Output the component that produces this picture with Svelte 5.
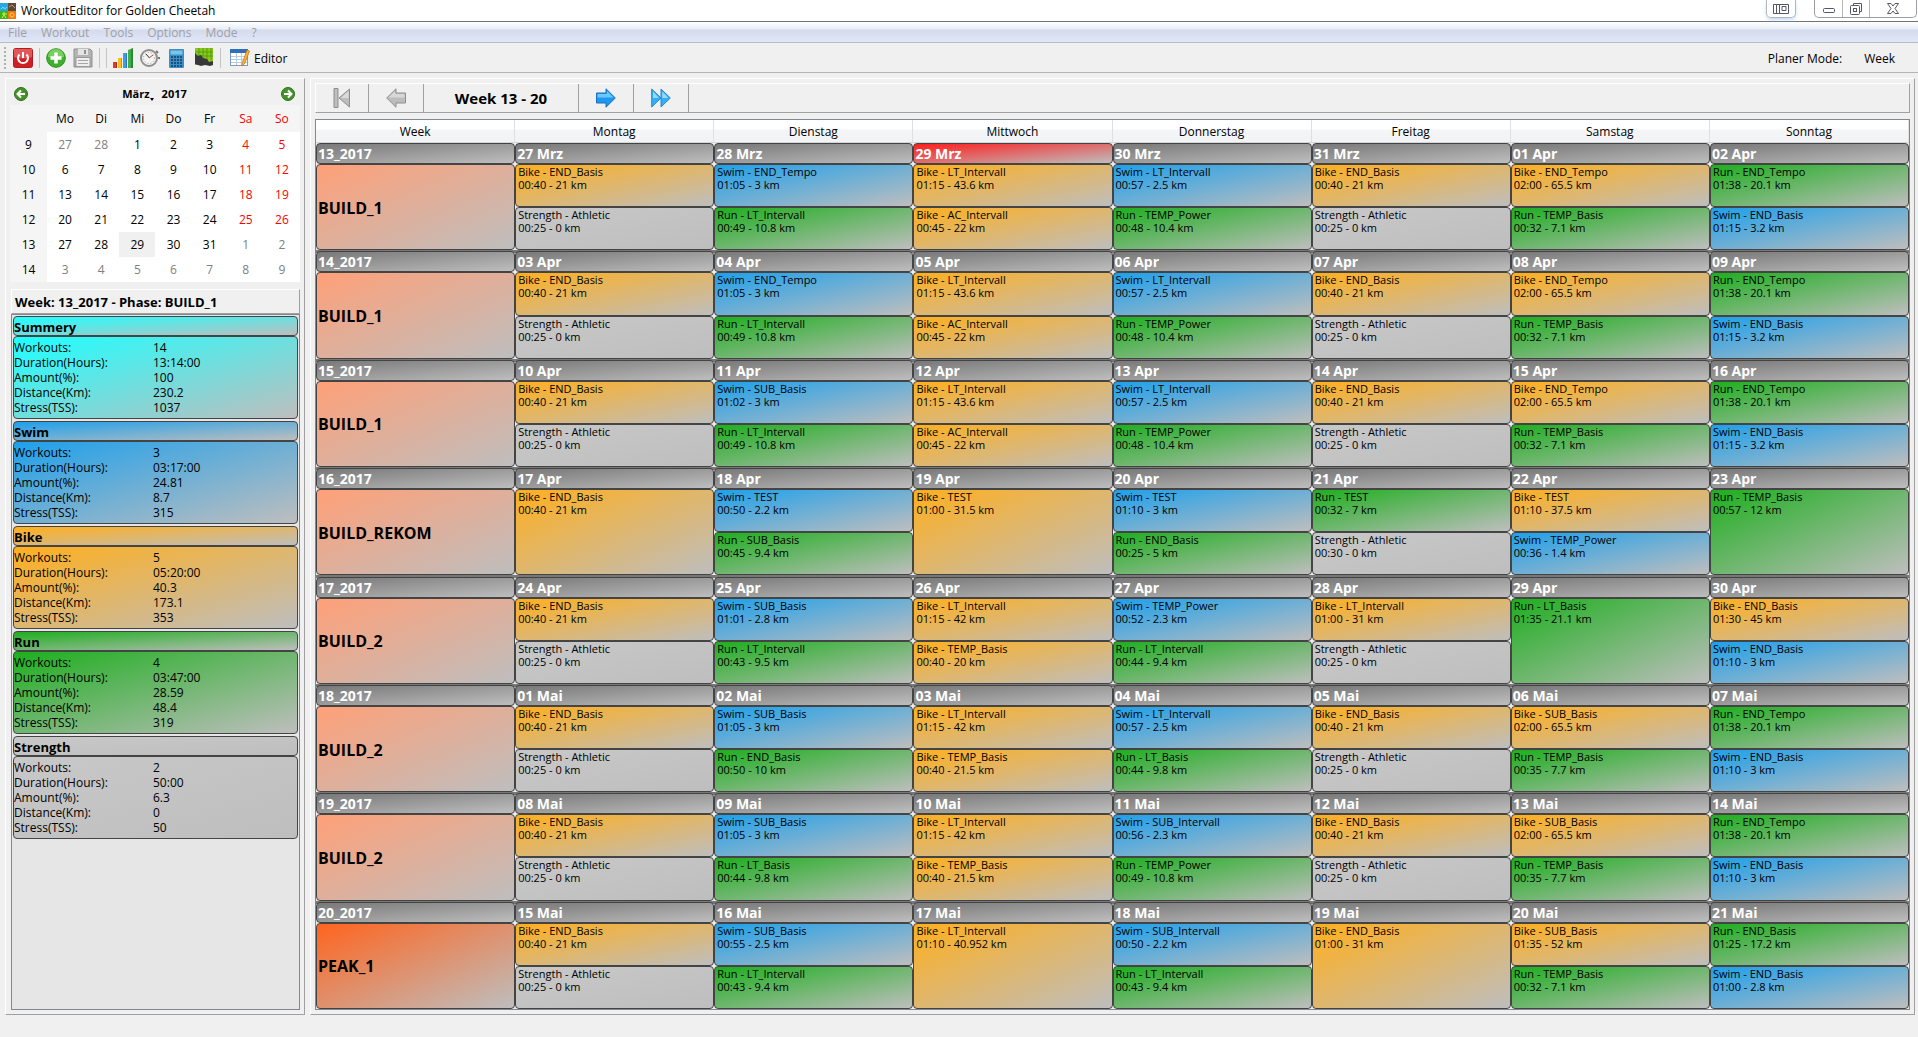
<script lang="ts">
  const menus = ['File', 'Workout', 'Tools', 'Options', 'Mode', '?'];
  const dayNames = ['Mo', 'Di', 'Mi', 'Do', 'Fr', 'Sa', 'So'];
  const columns = ['Week', 'Montag', 'Dienstag', 'Mittwoch', 'Donnerstag', 'Freitag', 'Samstag', 'Sonntag'];

  const calendar = [
    { week: 9, days: [27, 28, 1, 2, 3, 4, 5] },
    { week: 10, days: [6, 7, 8, 9, 10, 11, 12] },
    { week: 11, days: [13, 14, 15, 16, 17, 18, 19] },
    { week: 12, days: [20, 21, 22, 23, 24, 25, 26] },
    { week: 13, days: [27, 28, 29, 30, 31, 1, 2] },
    { week: 14, days: [3, 4, 5, 6, 7, 8, 9] },
  ];
  const outside = (row: number, day: number) => (row === 0 && day > 20) || (row > 3 && day < 10);

  const labels = ['Workouts:', 'Duration(Hours):', 'Amount(%):', 'Distance(Km):', 'Stress(TSS):'];
  const totals = [
    { name: 'Summery', kind: 'summary', values: ['14', '13:14:00', '100', '230.2', '1037'] },
    { name: 'Swim', kind: 'swim', values: ['3', '03:17:00', '24.81', '8.7', '315'] },
    { name: 'Bike', kind: 'bike', values: ['5', '05:20:00', '40.3', '173.1', '353'] },
    { name: 'Run', kind: 'run', values: ['4', '03:47:00', '28.59', '48.4', '319'] },
    { name: 'Strength', kind: 'strength', values: ['2', '50:00', '6.3', '0', '50'] },
  ];

  // One string per day; workouts of a day are separated by "/".
  const plan = [
    { week: '13_2017', phase: 'BUILD_1', dates: ['27 Mrz', '28 Mrz', '29 Mrz', '30 Mrz', '31 Mrz', '01 Apr', '02 Apr'], days: [
      'Bike END_Basis 00:40 21/Strength Athletic 00:25 0', 'Swim END_Tempo 01:05 3/Run LT_Intervall 00:49 10.8',
      'Bike LT_Intervall 01:15 43.6/Bike AC_Intervall 00:45 22', 'Swim LT_Intervall 00:57 2.5/Run TEMP_Power 00:48 10.4',
      'Bike END_Basis 00:40 21/Strength Athletic 00:25 0', 'Bike END_Tempo 02:00 65.5/Run TEMP_Basis 00:32 7.1',
      'Run END_Tempo 01:38 20.1/Swim END_Basis 01:15 3.2'] },
    { week: '14_2017', phase: 'BUILD_1', dates: ['03 Apr', '04 Apr', '05 Apr', '06 Apr', '07 Apr', '08 Apr', '09 Apr'], days: [
      'Bike END_Basis 00:40 21/Strength Athletic 00:25 0', 'Swim END_Tempo 01:05 3/Run LT_Intervall 00:49 10.8',
      'Bike LT_Intervall 01:15 43.6/Bike AC_Intervall 00:45 22', 'Swim LT_Intervall 00:57 2.5/Run TEMP_Power 00:48 10.4',
      'Bike END_Basis 00:40 21/Strength Athletic 00:25 0', 'Bike END_Tempo 02:00 65.5/Run TEMP_Basis 00:32 7.1',
      'Run END_Tempo 01:38 20.1/Swim END_Basis 01:15 3.2'] },
    { week: '15_2017', phase: 'BUILD_1', dates: ['10 Apr', '11 Apr', '12 Apr', '13 Apr', '14 Apr', '15 Apr', '16 Apr'], days: [
      'Bike END_Basis 00:40 21/Strength Athletic 00:25 0', 'Swim SUB_Basis 01:02 3/Run LT_Intervall 00:49 10.8',
      'Bike LT_Intervall 01:15 43.6/Bike AC_Intervall 00:45 22', 'Swim LT_Intervall 00:57 2.5/Run TEMP_Power 00:48 10.4',
      'Bike END_Basis 00:40 21/Strength Athletic 00:25 0', 'Bike END_Tempo 02:00 65.5/Run TEMP_Basis 00:32 7.1',
      'Run END_Tempo 01:38 20.1/Swim END_Basis 01:15 3.2'] },
    { week: '16_2017', phase: 'BUILD_REKOM', dates: ['17 Apr', '18 Apr', '19 Apr', '20 Apr', '21 Apr', '22 Apr', '23 Apr'], days: [
      'Bike END_Basis 00:40 21', 'Swim TEST 00:50 2.2/Run SUB_Basis 00:45 9.4', 'Bike TEST 01:00 31.5',
      'Swim TEST 01:10 3/Run END_Basis 00:25 5', 'Run TEST 00:32 7/Strength Athletic 00:30 0',
      'Bike TEST 01:10 37.5/Swim TEMP_Power 00:36 1.4', 'Run TEMP_Basis 00:57 12'] },
    { week: '17_2017', phase: 'BUILD_2', dates: ['24 Apr', '25 Apr', '26 Apr', '27 Apr', '28 Apr', '29 Apr', '30 Apr'], days: [
      'Bike END_Basis 00:40 21/Strength Athletic 00:25 0', 'Swim SUB_Basis 01:01 2.8/Run LT_Intervall 00:43 9.5',
      'Bike LT_Intervall 01:15 42/Bike TEMP_Basis 00:40 20', 'Swim TEMP_Power 00:52 2.3/Run LT_Intervall 00:44 9.4',
      'Bike LT_Intervall 01:00 31/Strength Athletic 00:25 0', 'Run LT_Basis 01:35 21.1',
      'Bike END_Basis 01:30 45/Swim END_Basis 01:10 3'] },
    { week: '18_2017', phase: 'BUILD_2', dates: ['01 Mai', '02 Mai', '03 Mai', '04 Mai', '05 Mai', '06 Mai', '07 Mai'], days: [
      'Bike END_Basis 00:40 21/Strength Athletic 00:25 0', 'Swim SUB_Basis 01:05 3/Run END_Basis 00:50 10',
      'Bike LT_Intervall 01:15 42/Bike TEMP_Basis 00:40 21.5', 'Swim LT_Intervall 00:57 2.5/Run LT_Basis 00:44 9.8',
      'Bike END_Basis 00:40 21/Strength Athletic 00:25 0', 'Bike SUB_Basis 02:00 65.5/Run TEMP_Basis 00:35 7.7',
      'Run END_Tempo 01:38 20.1/Swim END_Basis 01:10 3'] },
    { week: '19_2017', phase: 'BUILD_2', dates: ['08 Mai', '09 Mai', '10 Mai', '11 Mai', '12 Mai', '13 Mai', '14 Mai'], days: [
      'Bike END_Basis 00:40 21/Strength Athletic 00:25 0', 'Swim SUB_Basis 01:05 3/Run LT_Basis 00:44 9.8',
      'Bike LT_Intervall 01:15 42/Bike TEMP_Basis 00:40 21.5', 'Swim SUB_Intervall 00:56 2.3/Run TEMP_Power 00:49 10.8',
      'Bike END_Basis 00:40 21/Strength Athletic 00:25 0', 'Bike SUB_Basis 02:00 65.5/Run TEMP_Basis 00:35 7.7',
      'Run END_Tempo 01:38 20.1/Swim END_Basis 01:10 3'] },
    { week: '20_2017', phase: 'PEAK_1', dates: ['15 Mai', '16 Mai', '17 Mai', '18 Mai', '19 Mai', '20 Mai', '21 Mai'], days: [
      'Bike END_Basis 00:40 21/Strength Athletic 00:25 0', 'Swim SUB_Basis 00:55 2.5/Run LT_Intervall 00:43 9.4',
      'Bike LT_Intervall 01:10 40.952', 'Swim SUB_Intervall 00:50 2.2/Run LT_Intervall 00:43 9.4',
      'Bike END_Basis 01:00 31', 'Bike SUB_Basis 01:35 52/Run TEMP_Basis 00:32 7.1',
      'Run END_Basis 01:25 17.2/Swim END_Basis 01:00 2.8'] },
  ].map((w) => ({
    ...w,
    days: w.days.map((d) =>
      d.split('/').map((s) => {
        const [sport, name, time, km] = s.split(' ');
        return { kind: sport.toLowerCase(), title: `${sport} - ${name}`, detail: `${time} - ${km} km` };
      })
    ),
  }));
</script>

<div class="window">
  <header class="titlebar">
    <svg class="appicon" viewBox="0 0 16 16" aria-hidden="true">
      <rect width="8" height="8" fill="#28a8e0" /><rect x="8" width="8" height="8" fill="#5a4a3c" />
      <rect y="8" width="8" height="8" fill="#3cb422" /><rect x="8" y="8" width="8" height="8" fill="#f47a10" />
      <path d="M1 6q2-3 3-1t3-1" stroke="#8fe0ff" fill="none" /><path d="M9 4l3-2 3 3" stroke="#c09060" fill="none" />
      <path d="M4 9v3l-2 3m2-3l2 3M2 11h5" stroke="#d8f040" fill="none" /><circle cx="12" cy="12" r="2" fill="none" stroke="#ffd040" />
    </svg>
    <span class="apptitle">WorkoutEditor for Golden Cheetah</span>
    <div class="winbuttons">
      <button class="winbtn extra" aria-label="Dual screen">
        <svg width="16" height="10" viewBox="0 0 16 10"><path d="M.5.5h15v9H.5zM3.5.5v9M6.5.5v9M9 2.5h4v4H9z" fill="none" stroke="#55566a" /></svg>
      </button>
      <div class="wingroup">
        <button class="winbtn" aria-label="Minimize">
          <svg class="low" width="12" height="6" viewBox="0 0 12 6"><rect x=".5" y=".5" width="11" height="4" rx="1" fill="#fff" stroke="#55566a" /></svg>
        </button>
        <button class="winbtn" aria-label="Restore">
          <svg width="12" height="12" viewBox="0 0 12 12"><path d="M3.5 2.500V.5h8v8h-2" fill="#fff" stroke="#55566a" /><rect x=".5" y="2.500" width="9" height="9" rx="1" fill="#fff" stroke="#55566a" /><rect x="3.500" y="5.500" width="3" height="3" fill="none" stroke="#55566a" /></svg>
        </button>
        <button class="winbtn close" aria-label="Close">
          <svg width="12" height="11" viewBox="0 0 12 11"><path d="M.5.5h3.500L6 3 8 .5h3.500L8 5.500l3.500 5H8L6 8l-2 2.500H.5L4 5.500z" fill="#fff" stroke="#55566a" /></svg>
        </button>
      </div>
    </div>
  </header>

  <nav class="menubar">
    {#each menus as m}<button>{m}</button>{/each}
  </nav>

  <div class="toolbar">
    <span class="grip"></span>
    <button class="tool" aria-label="Exit">
      <svg viewBox="0 0 20 20"><rect x=".5" y=".5" width="19" height="19" rx="2" fill="#cf2026" stroke="#b01c20" /><path d="M1 1h18v8q-9 3-18 0z" fill="#e2585a" /><path d="M6.500 6.500a5 5 0 1 0 7 0" fill="none" stroke="#fff" stroke-width="2" /><path d="M10 4v6" stroke="#fff" stroke-width="2" /></svg>
    </button>
    <span class="sep"></span>
    <button class="tool" aria-label="New">
      <svg viewBox="0 0 20 20"><circle cx="10" cy="10" r="9.300" fill="#3fae2a" stroke="#2d9020" /><path d="M2 9a8 8 0 0 1 16 0q-8 3-16 0z" fill="#78cf60" /><path d="M10 4.500v11M4.500 10h11" stroke="#fff" stroke-width="3.500" /></svg>
    </button>
    <button class="tool save" aria-label="Save">
      <svg viewBox="0 0 20 20"><path d="M1 1h16l2 2v16H1z" fill="#b4b4b4" stroke="#8e8e8e" /><rect x="5" y="1" width="10" height="6" fill="#e4e4e4" /><rect x="11" y="2" width="2" height="4" fill="#909090" /><rect x="3" y="9.500" width="14" height="9" fill="#eee" stroke="#9a9a9a" /><path d="M5 12.500h10M5 15.500h10" stroke="#a6a6a6" /></svg>
    </button>
    <span class="sep"></span><span class="sep"></span>
    <button class="tool" aria-label="Statistics">
      <svg viewBox="0 0 20 20"><path d="M0 14h4v6H0z" fill="#e8352c" /><path d="M5 10h4v10H5z" fill="#f5c21c" /><path d="M10 5h4v15h-4z" fill="#3d9be8" /><path d="M15 2l5-2v20h-5z" fill="#3fae49" /><path d="M3 14h1v6H3zM8 10h1v10H8zM13 5h1v15h-1zM18 1l2-1v20h-2z" fill="#000" opacity=".22" /></svg>
    </button>
    <button class="tool" aria-label="Stopwatch">
      <svg viewBox="0 0 20 20"><circle cx="9" cy="10" r="8" fill="#f4f4f4" stroke="#8f8f8f" stroke-width="2" /><circle cx="9" cy="10" r="5.500" fill="none" stroke="#999" stroke-dasharray="1 2" /><path d="M6 6l3.500 4" stroke="#333" /><path d="M9 10l4-3" stroke="#d04030" /><path d="M16 3l2 2M18 10h2" stroke="#777" stroke-width="2" /></svg>
    </button>
    <button class="tool" aria-label="Calculator">
      <svg viewBox="0 0 20 20"><rect x="2" y="1" width="15" height="19" rx="1" fill="#3a8fc4" /><rect x="3.500" y="2.500" width="12" height="4" fill="#7cc4e8" /><path d="M4 9h11M4 12h11M4 15h11M4 18h11" stroke="#1d4f7c" stroke-width="2" stroke-dasharray="2 1" /></svg>
    </button>
    <button class="tool" aria-label="Chart">
      <svg viewBox="0 0 20 20"><rect x="1" y="0" width="18" height="17" fill="#86c81c" /><path d="M5 0v12M9 0v12M13 0v12M17 0v12M1 4h18M1 8h18" stroke="#5c9c10" /><path d="M1 5l3 3 3-1 2 3 4 1 2 3 4-1v4l-3 1-5-1-4 1-6-2z" fill="#383838" /></svg>
    </button>
    <span class="sep wide"></span>
    <button class="tool editor">
      <svg viewBox="0 0 20 20"><rect x=".5" y="1.500" width="17" height="16" fill="#fff" stroke="#7d9cc0" /><rect x="0" y="1" width="18" height="4" fill="#2f6fb8" /><path d="M1 8.500h16M1 11.500h16M1 14.500h16M6.500 5v12M11.500 5v12" stroke="#b8cbe0" /><path d="M17 2l2.500 1-5 13-2.500 2 .3-3.500z" fill="#f7b52c" stroke="#b5761c" stroke-width=".7" /></svg>
      Editor
    </button>
    <div class="mode"><span id="mode">Planer Mode:</span><button aria-labelledby="mode week-mode"><span id="week-mode">Week</span></button></div>
  </div>

  <main class="content">
    <aside class="side frame">
      <section class="calendar">
        <div class="calnav">
          <button class="round" aria-label="Previous month"><svg viewBox="0 0 14 14"><circle cx="7" cy="7" r="6.500" fill="#45922a" stroke="#2c6f1c" /><path d="M11 7H4M7 3.500L3.500 7 7 10.500" fill="none" stroke="#fff" stroke-width="2" /></svg></button>
          <div class="caltitle"><button class="month">März<i></i></button><button>2017</button></div>
          <button class="round" aria-label="Next month"><svg viewBox="0 0 14 14"><circle cx="7" cy="7" r="6.500" fill="#45922a" stroke="#2c6f1c" /><path d="M3 7h7M7 3.500L10.500 7 7 10.500" fill="none" stroke="#fff" stroke-width="2" /></svg></button>
        </div>
        <table class="days">
          <thead><tr><th></th>{#each dayNames as d, i}<th class:weekend={i > 4}>{d}</th>{/each}</tr></thead>
          <tbody>
            {#each calendar as row, r}
              <tr>
                <th scope="row">{row.week}</th>
                {#each row.days as d, i}
                  <td class:weekend={i > 4} class:outside={outside(r, d)} class:selected={d === 29}>{d}</td>
                {/each}
              </tr>
            {/each}
          </tbody>
        </table>
      </section>

      <h2 class="phase">Week: 13_2017 - Phase: BUILD_1</h2>
      <section class="totals">
        {#each totals as t}
          <article>
            <h3 class="box {t.kind}">{t.name}</h3>
            <dl class="box {t.kind}">
              {#each labels as label, i}<dt>{label}</dt><dd>{t.values[i]}</dd>{/each}
            </dl>
          </article>
        {/each}
      </section>
    </aside>

    <section class="planner frame">
      <div class="weeknav">
        <button class="first" disabled aria-label="First week"><svg width="18" height="20" viewBox="0 0 18 20"><path d="M1 .5h4v19H1zM16.500 1v18L6 10z" fill="#bdbdbd" stroke="#8e8e8e" /><path d="M15.500 3v7H8z" fill="#dcdcdc" /></svg></button>
        <button disabled aria-label="Previous week"><svg width="20" height="20" viewBox="0 0 20 20"><path d="M.7 10L10 .8V5h9.500v10H10v4.200z" fill="#bdbdbd" stroke="#8e8e8e" /><path d="M2.500 9.500L9 3v3h9.500v3.500z" fill="#d8d8d8" /></svg></button>
        <span class="range">Week 13 - 20</span>
        <button aria-label="Next week"><svg width="20" height="20" viewBox="0 0 20 20"><path d="M19.300 10L10 .8V5H.5v10H10v4.200z" fill="#1e98ee" stroke="#1a6fc0" /><path d="M17.500 9.500L11 3v3H1.500v3.500z" fill="#6cc8fa" /></svg></button>
        <button aria-label="Last week"><svg width="20" height="20" viewBox="0 0 20 20"><path d="M.7 1v18L10 10zM10 1v18l9.300-9z" fill="#38aef2" stroke="#2288d4" /><path d="M2 3.500V10h6zM11.300 3.500V10h6z" fill="#96dafb" /></svg></button>
      </div>

      <div class="tablewrap">
        <table class="plan">
          <thead><tr>{#each columns as c}<th scope="col">{c}</th>{/each}</tr></thead>
          {#each plan as w}
            <tbody>
              <tr class="dates">
                <th scope="row"><div class="box date">{w.week}</div></th>
                {#each w.dates as d}<td><div class="box date" class:today={d === '29 Mrz'}>{d}</div></td>{/each}
              </tr>
              <tr class="workouts">
                <th scope="row"><div class="box name" class:peak={w.phase === 'PEAK_1'}>{w.phase}</div></th>
                {#each w.days as day}
                  <td>
                    <div class="stack">
                      {#each day as item}
                        <div class="box workout {item.kind}">{item.title}<br />{item.detail}</div>
                      {/each}
                    </div>
                  </td>
                {/each}
              </tr>
            </tbody>
          {/each}
        </table>
      </div>
    </section>
  </main>
</div>

<style>
  :global(body) { background: #f0f0f0; }
  * { box-sizing: border-box; }
  .window {
    display: flex; flex-direction: column; min-height: 100vh; padding-bottom: 22px;
    font: 12px/15px "Open Sans", "Noto Sans", sans-serif; color: #000; background: #f0f0f0;
  }
  button { font: inherit; color: inherit; border: 0; background: none; padding: 0; margin: 0; }
  svg { display: block; flex: none; }

  .titlebar { display: flex; align-items: flex-start; height: 22px; background: #fff; border-bottom: 1px solid #707478; }
  .appicon { width: 16px; height: 16px; margin-top: 3px; }
  .apptitle { margin: 3px 0 0 5px; }
  .winbuttons { display: flex; gap: 18px; margin-left: auto; padding-right: 1px; }
  .wingroup { display: flex; border: 1px solid #9a9da2; border-top: 0; border-radius: 0 0 5px 5px; }
  .winbtn { display: flex; align-items: center; justify-content: center; width: 27px; height: 17px; }
  .winbtn + .winbtn { border-left: 1px solid #b4b6ba; }
  .winbtn.close { width: 47px; }
  .winbtn.extra { width: 30px; height: 18px; border: 1px solid #b4b6ba; border-top: 0; border-radius: 0 0 5px 5px; box-shadow: 0 2px 4px -1px #a9cdf5; }
  .low { margin-top: 4px; }

  .menubar {
    display: flex; gap: 14px; height: 21px; padding-left: 8px; color: #a0a0a4;
    background: linear-gradient(#fff, #e9edf6 7px, #d4dbed 8px, #e2e7f6); border-bottom: 1px solid #b6bccc;
  }

  .toolbar { display: flex; align-items: center; height: 30px; padding: 1px 23px 0 4px; border-bottom: 1px solid #b4b4b4; }
  .grip { width: 2px; height: 22px; margin-right: 7px; background: repeating-linear-gradient(#b0b0b0 0 2px, #f0f0f0 2px 4px); }
  .tool { display: flex; align-items: center; gap: 4px; margin-right: 7px; }
  .tool svg { width: 20px; height: 20px; }
  .tool:has(+ .sep) { margin-right: 6px; }
  .sep { width: 1px; height: 20px; margin-right: 6px; background: #c4c4c4; }
  .sep.wide { margin-right: 9px; }
  .mode { display: flex; gap: 22px; margin-left: auto; }

  .content { display: flex; flex: 1; gap: 5px; padding: 5px 3px 0 5px; }
  .frame { border: 1px solid #fff; border-right-color: #a0a0a0; border-bottom-color: #a0a0a0; }
  .side { display: flex; flex-direction: column; width: 300px; padding: 0 4px 4px; }

  .calnav { display: flex; align-items: center; justify-content: space-between; height: 26px; padding: 3px 5px 0 4px; }
  .round svg { width: 14px; height: 14px; }
  .caltitle { display: flex; gap: 8px; font-weight: 700; font-size: 11px; }
  .month { display: flex; align-items: flex-end; }
  .month i { border: 2px solid transparent; border-top: 3px solid #000; border-bottom: 0; }
  .days { width: 100%; table-layout: fixed; border-collapse: collapse; text-align: center; }
  .days th, .days td { height: 25px; padding: 0; font-weight: 400; }
  .days th { background: #f5f5f5; }
  .days td { background: #fff; }
  .days thead th { height: 27px; }
  .days thead th:first-child { width: 37px; }
  .days .weekend { color: #f00; }
  .days .outside { color: #808080; }
  .days .selected { background: #f0f0f0; }

  .phase {
    margin: 7px 0 0 1px; padding: 4px 3px; height: 25px; font-size: 13px; line-height: 17px;
    border: 1px solid #fff; border-right-color: #a0a0a0; border-bottom-color: #a0a0a0;
  }
  .totals { flex: 1; margin: 0 0 0 1px; padding: 1px; border: 1px solid #828790; background: #e6e6e6; }
  .totals article { padding-bottom: 2px; }

  .box { border: 1px solid #444; border-radius: 4px; background: linear-gradient(to bottom right, var(--tone), #bebebe); }
  .summary { --tone: #1effff; }
  .swim { --tone: #1ea0eb; }
  .bike { --tone: #ffaf1e; }
  .run { --tone: #1eaf1e; }
  .strength { --tone: #c8c8c8; }
  .date { --tone: #787878; }
  .today { --tone: #ff1e1e; }
  .name { --tone: #ffa078; }
  .peak { --tone: #ff641e; }

  h3.box { margin: 0; height: 20px; font-size: 13px; line-height: 20px; }
  dl.box { display: grid; grid-template-columns: 139px 1fr; align-content: start; margin: 0; height: 83px; padding-top: 3px; line-height: 15px; }
  dd { margin: 0; }

  .planner { display: flex; flex: 1; flex-direction: column; padding: 4px; }
  .weeknav { display: flex; height: 30px; border: 1px solid #fff; border-right-color: #a0a0a0; border-bottom-color: #a0a0a0; }
  .weeknav > * { display: flex; align-items: center; justify-content: center; width: 55px; border-right: 1px solid #a0a0a0; }
  .weeknav .first { width: 53px; }
  .weeknav .range { width: 155px; font-size: 15px; font-weight: 700; }
  .tablewrap { display: flex; flex: 1; margin-top: 6px; border: 1px solid #828790; background: #fff; }
  .plan { width: 100%; table-layout: fixed; border-spacing: 0; }
  .plan th, .plan td { padding: 0; text-align: left; }
  .plan thead th {
    height: 23px; text-align: center; font-weight: 400;
    background: linear-gradient(#fff 9px, #f4f5f7 10px, #f2f3f5); border-right: 1px solid #dedfe1; border-bottom: 1px solid #d5d5d5;
  }
  .plan .dates > * { height: 21px; background: #eee; }
  .plan tbody + tbody .dates > * { padding-top: 1px; background: linear-gradient(#777 3px, #eee 3px); }
  .plan .workouts > * { height: 86px; background: #eee; }
  .date { height: 21px; padding-left: 1px; font-size: 14px; line-height: 19px; font-weight: 700; color: #fff; }
  .name { display: flex; align-items: center; height: 100%; padding: 2px 0 0 1px; font-size: 16px; font-weight: 700; }
  .stack { display: flex; flex-direction: column; height: 100%; }
  .workout { flex: 1; padding-left: 2px; font-size: 11px; line-height: 13px; }
</style>
